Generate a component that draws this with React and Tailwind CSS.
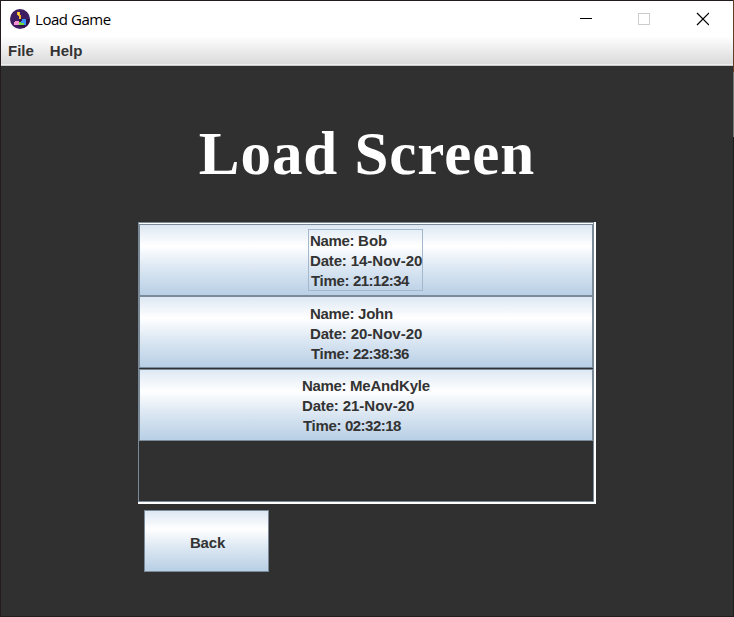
const saves = [
  {
    name: 'Bob', date: '14-Nov-20', time: '21:12:34',
    indent: 'pl-[169px]', offset: 'pt-px', nameTracking: '', gap: '', focused: true,
  },
  {
    name: 'John', date: '20-Nov-20', time: '22:38:36',
    indent: 'pl-[169px]', offset: 'pt-[2px]', nameTracking: 'tracking-[-0.25px]', gap: '', focused: false,
  },
  {
    name: 'MeAndKyle', date: '21-Nov-20', time: '02:32:18',
    indent: 'pl-[161px]', offset: 'pt-px', nameTracking: 'tracking-[-0.2px]', gap: 'mt-px', focused: false,
  },
];

const metal =
  'border border-[#7a8a99] bg-[linear-gradient(to_bottom,#dde8f3_0%,#ffffff_30%,#dde8f3_60%,#b8cfe5_100%)]';

function GameIcon() {
  return (
    <svg width="20" height="20" viewBox="0 0 20 20" className="ml-[9px]">
      <circle cx="10" cy="10" r="10" fill="#3f1d63" />
      <path d="M10 10h9.9a10 10 0 0 1-6 9l-7-3z" fill="#2c1248" />
      <g shapeRendering="crispEdges">
        <path d="M7 3h3v3h1v4h-2V7H8V6H7z" fill="#fdb52c" />
        <path d="M8 3h1v3H8z" fill="#ffd75a" />
        <path d="M5 12h4v4H4v-3h1z" fill="#f78fd0" />
        <path d="M11 12h1v-2h4v6H9v-3h2z" fill="#3a8ff7" />
        <path d="M9 13h2v1h3v2H9z" fill="#72dc3c" />
      </g>
    </svg>
  );
}

function TitleBar() {
  return (
    <div className="flex h-[35px] items-center bg-white">
      <GameIcon />
      <span className="ml-[5px] mt-px font-['Open_Sans','Noto_Sans',sans-serif] text-[15px] font-normal leading-5 tracking-[-0.45px] text-black">
        Load Game
      </span>
      <svg width="130" height="14" viewBox="0 0 130 14" className="ml-auto mr-[24px]" shapeRendering="crispEdges">
        <path d="M1 6.5h12" stroke="#000" />
        <rect x="59.5" y="1.5" width="11" height="11" fill="none" stroke="#ccc" />
        <path d="M118 1l12 12M130 1l-12 12" stroke="#000" shapeRendering="auto" strokeWidth="1.2" />
      </svg>
    </div>
  );
}

function SaveButton({ save }) {
  return (
    <button className={`flex h-[72px] w-[454px] items-start pt-[4px] text-left ${metal} ${save.gap} ${save.indent}`}>
      <span
        className={`-ml-px block h-[62px] whitespace-nowrap border pl-px leading-5 ${save.offset} ${
          save.focused ? 'w-[115px] border-[#a3b8cc]' : 'border-transparent'
        }`}
      >
        <span className="block">
          <span className="tracking-[-0.33px]">Name: </span>
          <span className={save.nameTracking}>{save.name}</span>
        </span>
        <span className="block">
          <span className="tracking-[-0.17px]">Date: </span>
          {save.date}
        </span>
        <span className="block pl-px">
          <span className="tracking-[-0.33px]">Time: </span>
          <span className="tracking-[-0.5px]">{save.time}</span>
        </span>
      </span>
    </button>
  );
}

export default function App() {
  return (
    <div className="flex h-[617px] w-[734px] overflow-hidden font-['Liberation_Sans',Arial,sans-serif] text-[15px] font-bold text-[#333333]">
      <div className="flex w-[733px] flex-col border-y border-l border-[#231c1e] bg-[#303030]">
        <TitleBar />
        <div className="flex h-[30px] flex-col">
          <div className="flex h-[28px] items-center gap-[16px] bg-[linear-gradient(to_bottom,#ffffff,#dadada)] pl-[7px] pt-[2px] leading-5">
            <span>File</span>
            <span>Help</span>
          </div>
          <div className="h-px bg-[#eeeeee]" />
          <div className="h-px bg-[#c4c8c8]" />
        </div>
        <h1 className="mt-[54px] h-[68px] text-center font-['Liberation_Serif','Times_New_Roman',serif] text-[61px] leading-[68px] tracking-[0.95px] text-white">
          Load Screen
        </h1>
        <div className="ml-[137px] mt-[34px] h-[282px] w-[458px] border-b-2 border-r-2 border-white">
          <div className="h-[280px] w-[456px] border border-[#7a8a99]">
            <div className="h-px bg-white" />
            {saves.map((save) => (
              <SaveButton key={save.name} save={save} />
            ))}
          </div>
        </div>
        <button className={`ml-[143px] mt-[6px] flex h-[62px] w-[125px] items-center justify-center pl-[2px] pt-[5px] tracking-[-0.2px] ${metal}`}>
          Back
        </button>
      </div>
      <div className="flex w-px flex-col">
        <div className="h-[72px] bg-[#5c4028]" />
        <div className="h-[65px] bg-[#777777]" />
        <div className="flex-1 bg-[#231c1e]" />
      </div>
    </div>
  );
}
